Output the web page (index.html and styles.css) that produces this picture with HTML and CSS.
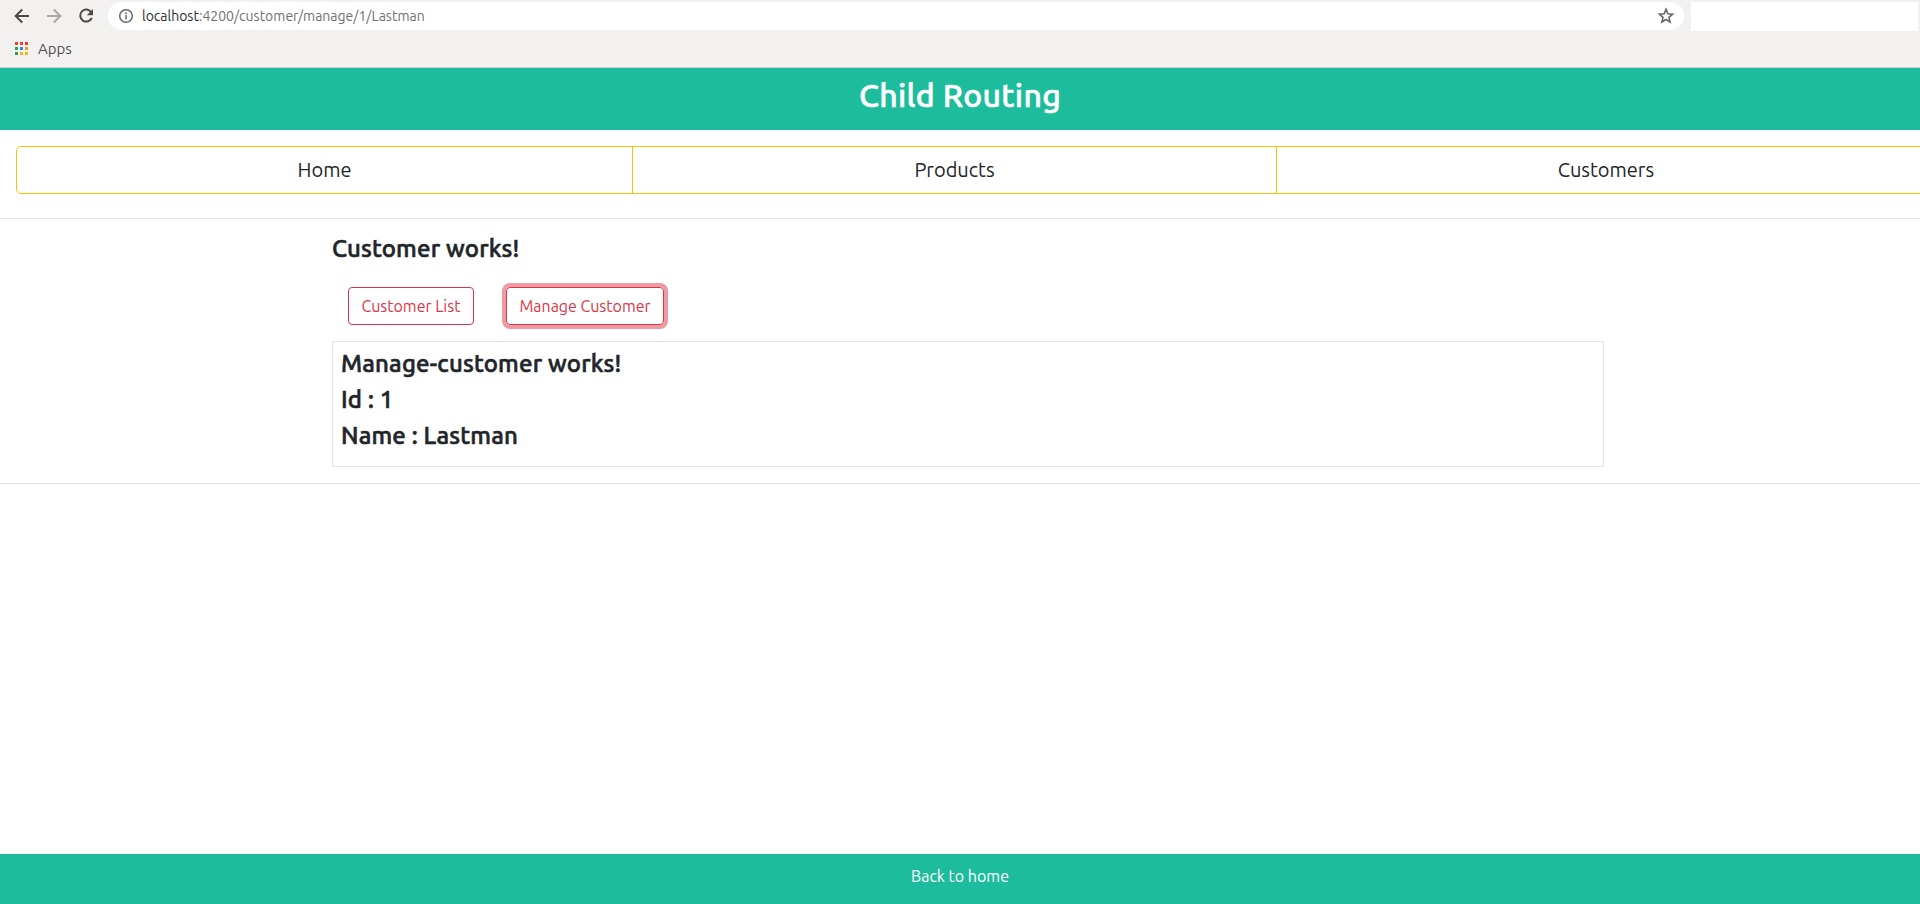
FILE: index.html
```
<!DOCTYPE html>
<html lang="en">
<head>
<meta charset="utf-8">
<title>Child Routing</title>
<link rel="stylesheet" href="styles.css">
</head>
<body>
<div class="browser">
  <div class="toolbar">
    <svg class="nav-icon" viewBox="0 0 16 16"><path d="M15 8H2M8.2 1.5 1.7 8l6.5 6.5"/></svg>
    <svg class="nav-icon nav-icon-off" viewBox="0 0 16 16"><path d="M1 8h13M7.8 1.5 14.3 8l-6.5 6.5"/></svg>
    <svg class="nav-icon" viewBox="0 0 16 16"><path d="M13.2 4.2A6 6 0 1 0 13.8 9.8"/><path class="fill" d="M15 1v6.2H8.8z"/></svg>
    <div class="address">
      <svg class="info" viewBox="0 0 16 16"><circle cx="8" cy="8" r="6.3"/><path d="M8 7v4.5M8 4.3v1.6"/></svg>
      <span class="url"><span class="host">localhost</span>:4200/customer/manage/1/Lastman</span>
      <svg class="star" viewBox="0 0 16 16"><path d="m8 2.1 1.65 3.95 4.25.35-3.25 2.8 1 4.15L8 11.15l-3.65 2.2 1-4.15L2.1 6.4l4.25-.35z"/></svg>
    </div>
    <div class="blank"></div>
  </div>
  <div class="bookmarks">
    <div class="apps-grid"><i class="r"></i><i class="r"></i><i class="r"></i><i class="g"></i><i class="b"></i><i class="o"></i><i class="g"></i><i class="y"></i><i class="y"></i></div>
    <span class="apps-label">Apps</span>
  </div>
</div>
<header class="header"><h1 class="title">Child Routing</h1></header>
<nav class="tabs">
  <a class="tab tab-home">Home</a>
  <a class="tab tab-products">Products</a>
  <a class="tab tab-customers">Customers</a>
</nav>
<main class="main">
  <div class="container">
    <h4 class="heading">Customer works!</h4>
    <div class="actions">
      <a class="btn btn-list">Customer List</a>
      <a class="btn btn-manage">Manage Customer</a>
    </div>
    <section class="card">
      <h4 class="line">Manage-customer works!</h4>
      <h4 class="line">Id : 1</h4>
      <h4 class="line">Name : Lastman</h4>
    </section>
  </div>
</main>
<footer class="footer"><a class="back">Back to home</a></footer>
</body>
</html>
```
FILE: styles.css
```
* { box-sizing: border-box; }
body {
  margin: 0;
  height: 904px;
  display: flex;
  flex-direction: column;
  overflow: hidden;
  background: #fff;
  color: #212529;
  font: 16px/24px Ubuntu, "Noto Sans", sans-serif;
  white-space: nowrap;
}
h1, h4 { margin: 0; font-weight: 500; -webkit-text-stroke: .6px currentColor; }

.browser { flex: none; height: 68px; background: #f2f1f0; border-bottom: 1px solid #d2d0ce; }
.toolbar { display: flex; padding: 2px 2px 0 14px; height: 32px; }
.nav-icon { width: 16px; height: 16px; margin: 6px 16px 0 0; fill: none; stroke: #4b4a48; stroke-width: 2; }
.nav-icon .fill { fill: #4b4a48; stroke: none; }
.nav-icon-off { stroke: #a9a8a6; }
.address { flex: 1; height: 28px; margin: 0 7px 0 -2px; padding: 0 9px 0 10px; display: flex; align-items: center; background: #fff; border-radius: 14px; }
.info { width: 16px; height: 16px; margin-right: 8px; fill: none; stroke: #666; stroke-width: 1.5; }
.star { width: 18px; height: 18px; margin-left: auto; fill: none; stroke: #666; stroke-width: 1.4; }
.url { color: #70706f; font-size: 14px; }
.host { color: #2d2d2d; }
.blank { width: 227px; height: 29px; background: #fff; }
.bookmarks { display: flex; align-items: center; height: 33px; padding-left: 15px; gap: 10px; }
.apps-grid { display: grid; grid-template-columns: repeat(3, 3px); grid-auto-rows: 3px; gap: 2px; }
.r { background: #f33b30; }
.g { background: #2f9e57; }
.b { background: #2b87f5; }
.o { background: #f09a13; }
.y { background: #fbb50a; }
.apps-label { color: #4f4f4f; font-size: 15px; }

.header { flex: none; height: 62px; padding-top: 8px; background: #1cbc9c; text-align: center; }
.title { color: #fff; font-size: 32px; line-height: 38px; letter-spacing: .33px; }

.tabs { flex: none; display: flex; margin: 16px 0 24px 16px; }
.tab { flex: none; height: 48px; border: 1px solid #ffc107; margin-right: -1px; font-size: 20px; line-height: 46px; text-align: center; }
.tab-home { width: 617px; border-radius: 5px 0 0 5px; }
.tab-products { width: 645px; }
.tab-customers { width: 660px; }

.main { flex: none; height: 266px; border: solid #dee2e6; border-width: 1px 0; padding: 15px 0 0 332px; }
.container { width: 1272px; }
.heading { font-size: 24px; line-height: 29px; letter-spacing: .17px; }
.actions { display: flex; gap: 32px; padding: 24px 16px 16px; }
.btn { height: 38px; border: 1px solid #dc3545; border-radius: 4px; color: #dc3545; line-height: 36px; text-align: center; }
.btn-list { width: 126px; }
.btn-manage { width: 158px; box-shadow: 0 0 0 4px #ed9aa2; }
.card { height: 126px; border: 1px solid #dee2e6; padding: 8px; }
.line { font-size: 24px; line-height: 28px; margin-bottom: 8px; letter-spacing: .17px; }

.footer { flex: none; height: 50px; margin-top: auto; padding-top: 10px; background: #1cbc9c; text-align: center; }
.back { color: #fff; }
```
